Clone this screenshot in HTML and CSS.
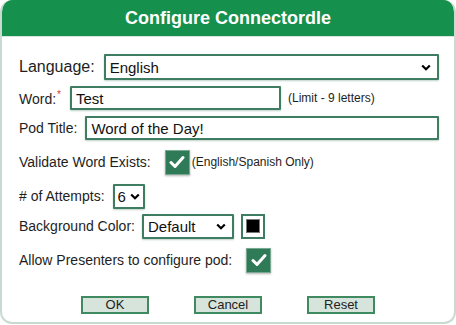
FILE: index.html
```html
<!DOCTYPE html>
<html lang="en">
<head>
  <meta charset="UTF-8" />
  <title>Configure Connectordle</title>
  <link rel="stylesheet" href="styles.css">
</head>
<body>
  <div class="dialog">
    <header class="dialog-header">Configure Connectordle</header>

    <div class="dialog-body">
      <div class="row row-language">
        <label class="label label-big">Language:</label>
        <select class="field select grow">
          <option>English</option>
        </select>
      </div>

      <div class="row">
        <label class="label">Word:<span class="req">*</span></label>
        <input class="field input word" type="text" value="Test">
        <span class="hint">(Limit - 9 letters)</span>
      </div>

      <div class="row">
        <label class="label">Pod Title:</label>
        <input class="field input grow" type="text" value="Word of the Day!">
      </div>

      <div class="row spaced">
        <label class="label">Validate Word Exists:</label>
        <span class="check">
          <svg width="16" height="14" viewBox="0 0 16 14"><path d="M2 7.5 L6 11.5 L14 2.5" fill="none" stroke="#fff" stroke-width="3" stroke-linecap="round" stroke-linejoin="round"/></svg>
        </span>
        <span class="hint tight">(English/Spanish Only)</span>
      </div>

      <div class="row spaced">
        <label class="label">#  of Attempts:</label>
        <select class="field select attempts">
          <option>6</option>
        </select>
      </div>

      <div class="row">
        <label class="label">Background Color:</label>
        <select class="field select bg">
          <option>Default</option>
        </select>
        <span class="swatch"><span class="swatch-fill"></span></span>
      </div>

      <div class="row spaced">
        <label class="label">Allow Presenters to configure pod:</label>
        <span class="check">
          <svg width="16" height="14" viewBox="0 0 16 14"><path d="M2 7.5 L6 11.5 L14 2.5" fill="none" stroke="#fff" stroke-width="3" stroke-linecap="round" stroke-linejoin="round"/></svg>
        </span>
      </div>

      <div class="actions">
        <button class="btn">OK</button>
        <button class="btn">Cancel</button>
        <button class="btn">Reset</button>
      </div>
    </div>
  </div>
</body>
</html>
```

FILE: styles.css
```css
:root {
  --green: #15904d;
  --field-border: #3f7d62;
  --check-fill: #2f7a57;
  --text: #1e1e1e;
  --font: "Liberation Sans", Arial, sans-serif;
}

* {
  box-sizing: border-box;
  margin: 0;
  padding: 0;
}

body {
  width: 456px;
  height: 325px;
  background: #fff;
  font-family: var(--font);
  color: var(--text);
  overflow: hidden;
}

.dialog {
  width: 456px;
  height: 324px;
  border: 2px solid #c9dad1;
  border-top: none;
  border-radius: 12px;
  overflow: hidden;
  background: #fff;
}

.dialog-header {
  background: var(--green);
  color: #fff;
  font-weight: bold;
  font-size: 18px;
  height: 37px;
  line-height: 37px;
  text-align: center;
  border-bottom: 1px solid #d9e6de;
}

.dialog-body {
  padding: 17px 15px 0 17px;
  display: flex;
  flex-direction: column;
  gap: 6px;
}

.row {
  display: flex;
  align-items: center;
  height: 24px;
}

.row-language {
  height: 26px;
  margin-bottom: 0;
}

.row.spaced {
  margin-top: 4px;
}

.label {
  font-size: 14px;
  margin-right: 8px;
  white-space: nowrap;
}

.label-big {
  font-size: 16px;
  margin-right: 9px;
}

.req {
  color: #d8323a;
  font-size: 10px;
  vertical-align: 6px;
  margin-left: 1px;
}

.field {
  height: 100%;
  border: 2px solid var(--field-border);
  border-radius: 1px;
  background: #fff;
  font-family: var(--font);
  font-size: 15px;
  color: #111;
  padding: 0 4px;
  box-shadow: 0 1px 2px rgba(63, 125, 98, 0.35);
  outline: none;
}

.grow {
  flex: 1;
}

.select {
  appearance: none;
  -webkit-appearance: none;
  padding-right: 22px;
  background-image: url("data:image/svg+xml;utf8,<svg xmlns='http://www.w3.org/2000/svg' width='10' height='7' viewBox='0 0 10 7'><path d='M1.2 1.5 L5 5.2 L8.8 1.5' fill='none' stroke='%23000' stroke-width='2.2'/></svg>");
  background-repeat: no-repeat;
  background-position: right 6px center;
}

.word {
  width: 211px;
  margin-left: 1px;
}

.hint {
  font-size: 12px;
  margin-left: 7px;
  white-space: nowrap;
}

.hint.tight {
  margin-left: 2px;
}

.check {
  width: 25px;
  height: 25px;
  background: var(--check-fill);
  border: 1px solid #7aa892;
  display: inline-flex;
  align-items: center;
  justify-content: center;
  box-shadow: 0 1px 2px rgba(0, 0, 0, 0.3);
  margin-left: 6px;
}

.attempts {
  width: 32px;
  height: 25px;
  padding-left: 3px;
  padding-right: 0;
  background-position: right 3px center;
}

.bg {
  width: 92px;
  height: 25px;
  margin-left: -1px;
}

.swatch {
  width: 24px;
  height: 25px;
  border: 2px solid var(--field-border);
  margin-left: 7px;
  display: inline-flex;
  align-items: center;
  justify-content: center;
  background: #fff;
}

.swatch-fill {
  width: 14px;
  height: 14px;
  background: #000;
  border: 1px solid #777;
}

.actions {
  display: flex;
  justify-content: center;
  gap: 45px;
  margin-top: 18px;
  padding-right: 2px;
}

.btn {
  width: 68px;
  height: 18px;
  background: #d6e4dc;
  border: 2px solid #3f8a60;
  font-family: var(--font);
  font-size: 13px;
  color: #222;
  line-height: 14px;
}
```
